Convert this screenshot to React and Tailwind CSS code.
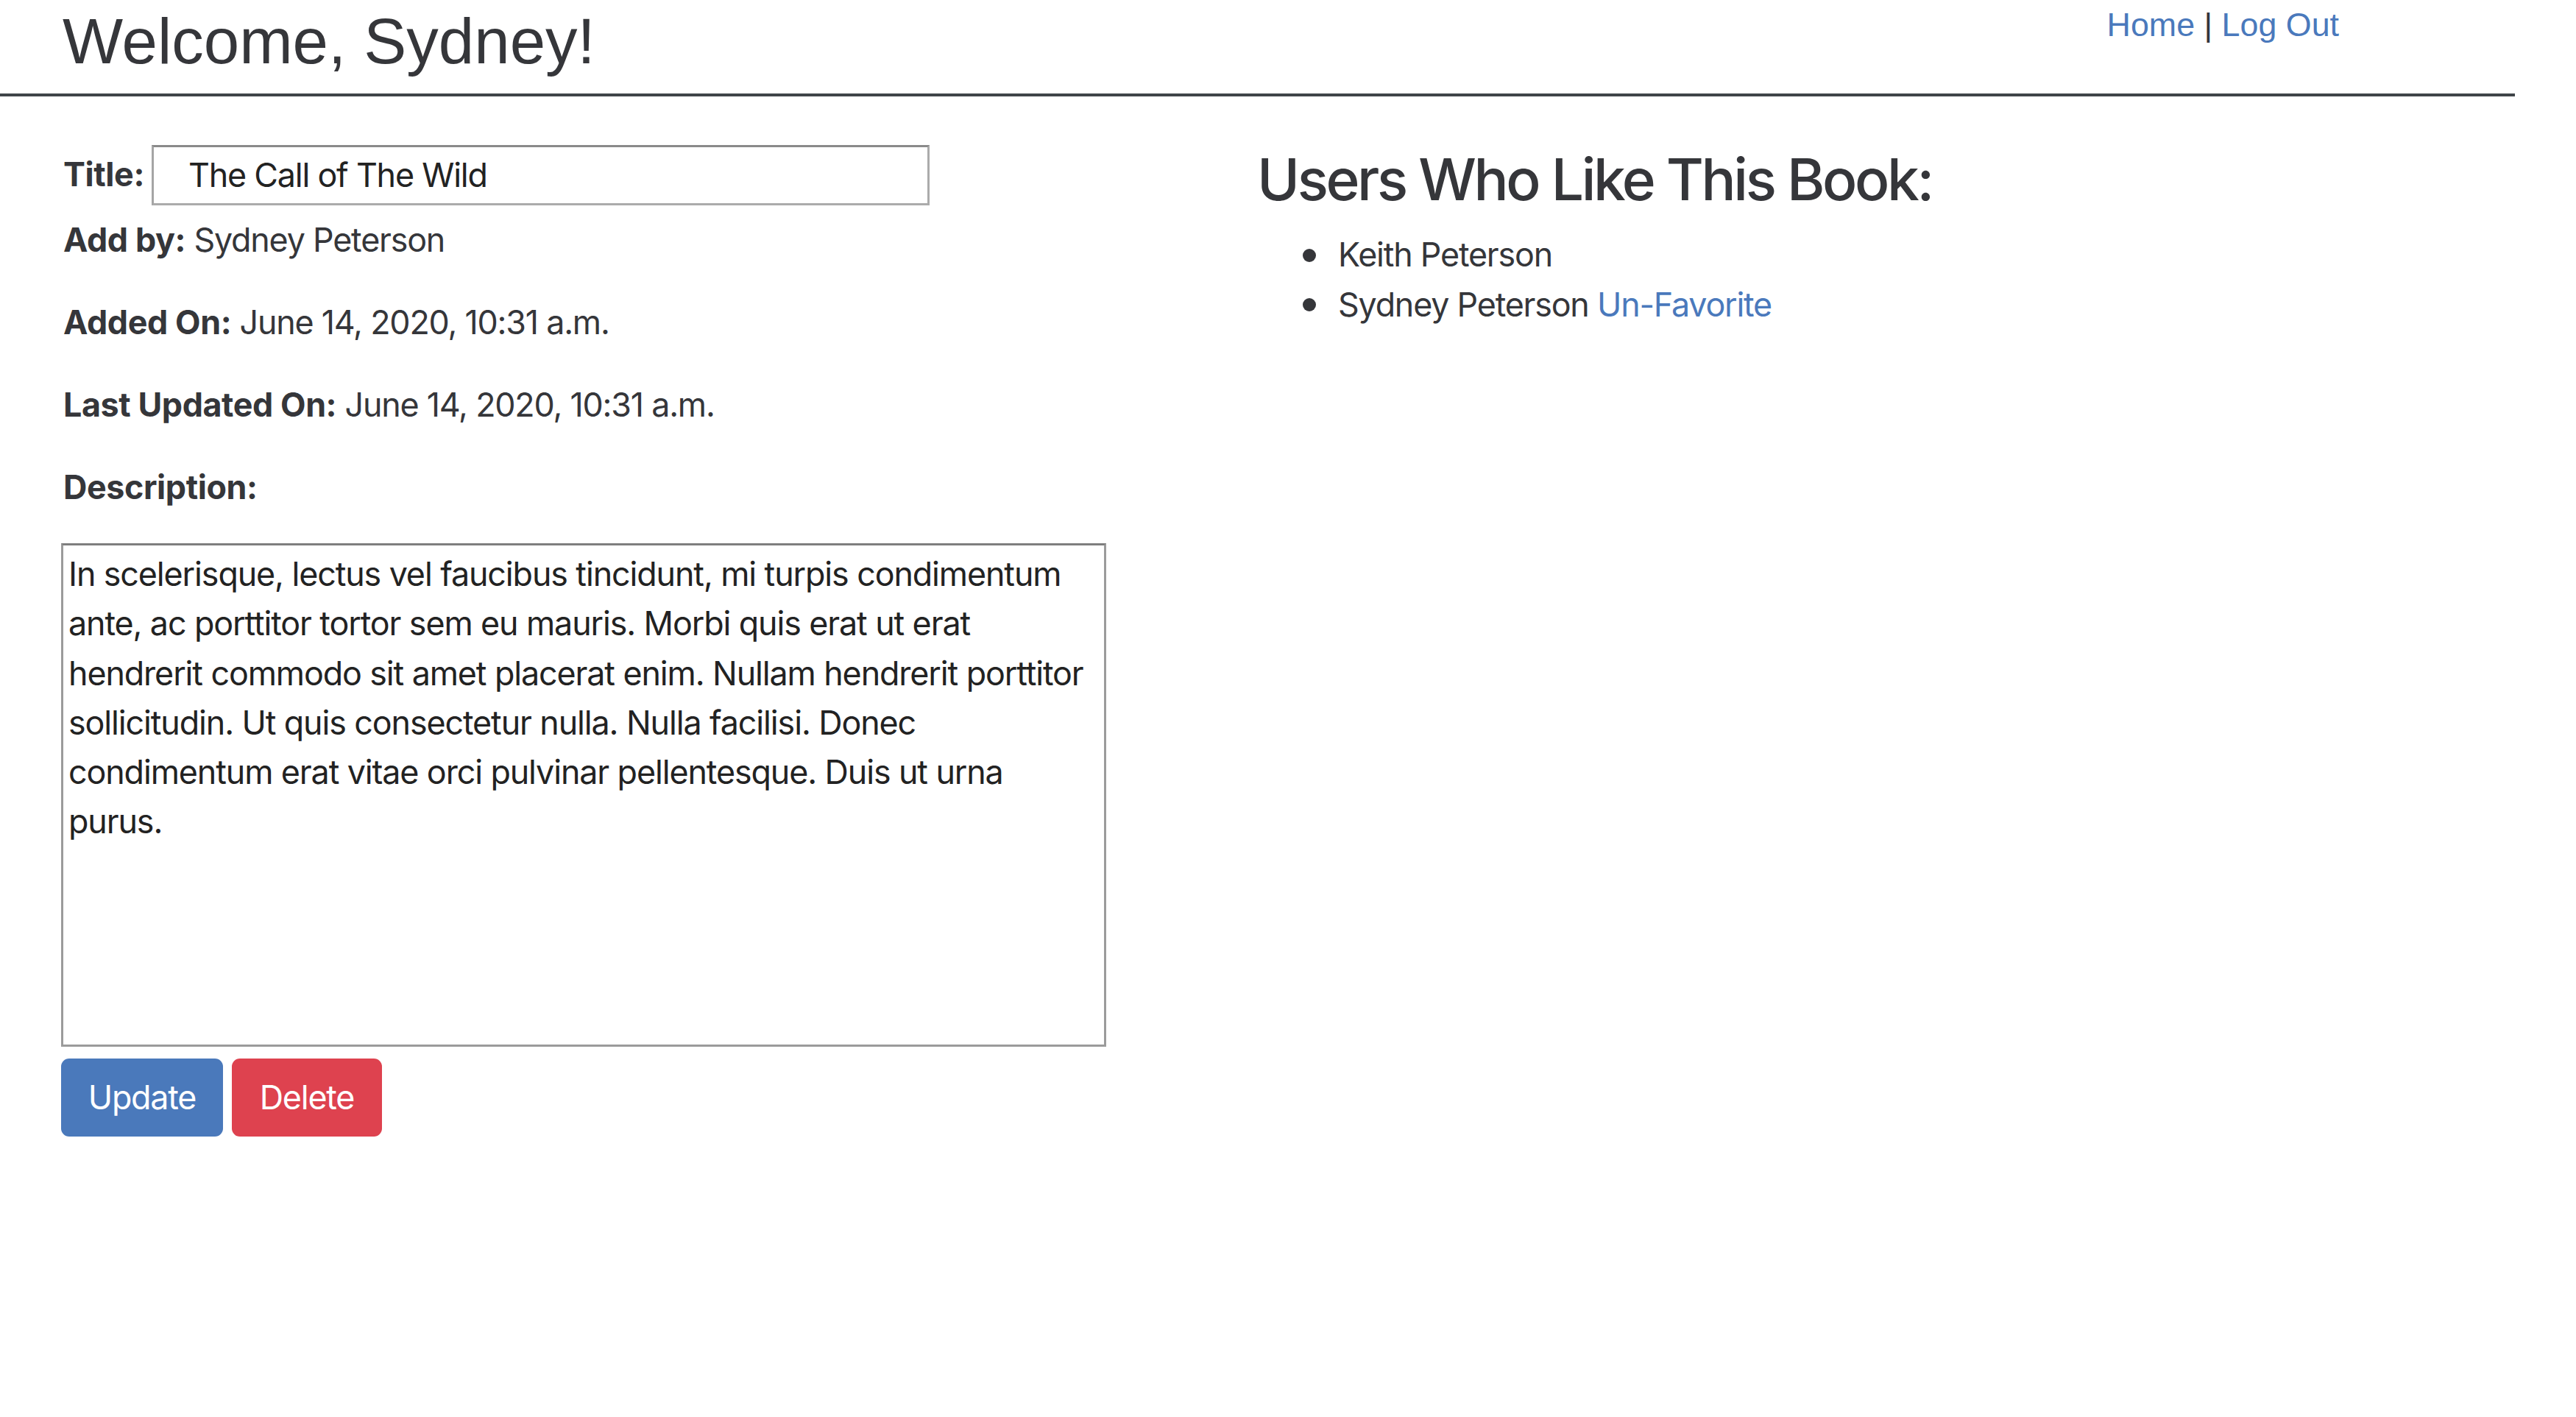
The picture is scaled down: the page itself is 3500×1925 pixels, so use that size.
import React from "react";

const desc =
  "In scelerisque, lectus vel faucibus tincidunt, mi turpis condimentum\nante, ac porttitor tortor sem eu mauris. Morbi quis erat ut erat\nhendrerit commodo sit amet placerat enim. Nullam hendrerit porttitor\nsollicitudin. Ut quis consectetur nulla. Nulla facilisi. Donec\ncondimentum erat vitae orci pulvinar pellentesque. Duis ut urna\npurus.";

export default function App() {
  return (
    <div className="min-h-[1925px] w-[3500px] bg-white text-[#35363a] font-['Inter',sans-serif] text-[44.8px] leading-[1.5] tracking-[-1.2px]">
      <header className="flex h-[127px] w-[3417px] items-start justify-between pl-[85px] pr-[239px] tracking-normal">
        <h1 className="pt-[12px] font-['Liberation_Sans',Arial,sans-serif] text-[87px] leading-none font-normal text-[#35363a]">
          Welcome, Sydney!
        </h1>
        <div className="font-['Liberation_Sans',Arial,sans-serif] text-[44.8px] leading-[1.5]">
          <a href="#" className="text-[#4a79bc]">Home</a>
          <span> | </span>
          <a href="#" className="text-[#4a79bc]">Log Out</a>
        </div>
      </header>
      <div className="h-[4px] w-[3417px] bg-[#3f4449]" />

      <main className="mt-[66px] flex pl-[83px]">
        <section className="w-[1420px] shrink-0">
          <div className="flex items-center">
            <label className="ml-[3px] font-bold tracking-[-0.4px]">Title:</label>
            <input
              type="text"
              defaultValue="The Call of The Wild"
              className="ml-[10px] h-[82px] w-[1057px] border-[3px] border-[#ababab] border-t-[#8a8a8a] border-l-[#a5a5a5] pl-[47px] text-[44.8px] tracking-[-1.2px] text-[#222] outline-none font-['Inter',sans-serif]"
            />
          </div>
          <p className="mt-[14px] mb-[44.8px] ml-[3px]">
            <b className="font-bold tracking-[-0.4px]">Add by:</b> Sydney Peterson
          </p>
          <p className="mb-[44.8px] ml-[3px]">
            <b className="font-bold tracking-[-0.4px]">Added On:</b> June 14, 2020, 10:31 a.m.
          </p>
          <p className="mb-[44.8px] ml-[3px]">
            <b className="font-bold tracking-[-0.4px]">Last Updated On:</b> June 14, 2020, 10:31 a.m.
          </p>
          <p className="mb-[42px] ml-[3px]">
            <b className="font-bold tracking-[-0.4px]">Description:</b>
          </p>
          <textarea
            defaultValue={desc}
            className="block h-[684px] w-[1420px] resize-none border-[3px] border-[#9b9b9b] border-t-[#7e7e7e] px-[7px] pt-[6px] text-[44.8px] leading-[1.5] tracking-[-1.1px] text-[#222] outline-none font-['Inter',sans-serif]"
          />
          <div className="mt-[16px] flex gap-[12px]">
            <button className="h-[106px] w-[220px] rounded-[11px] bg-[#4a79bb] text-white text-[44.8px] tracking-[-1.2px]">
              Update
            </button>
            <button className="h-[106px] w-[204px] rounded-[11px] bg-[#de424f] text-white text-[44.8px] tracking-[-1.2px]">
              Delete
            </button>
          </div>
        </section>

        <section className="ml-[205px]">
          <h3 className="text-[78.4px] leading-[1.2] font-medium tracking-[-3.4px] mb-[22.4px]">
            Users Who Like This Book:
          </h3>
          <ul className="pl-[62px]">
            <li className="flex items-center">
              <span className="mr-[30px] h-[18px] w-[18px] rounded-full bg-[#35363a]" />
              <span>Keith Peterson</span>
            </li>
            <li className="flex items-center">
              <span className="mr-[30px] h-[18px] w-[18px] rounded-full bg-[#35363a]" />
              <span>
                Sydney Peterson{" "}
                <a href="#" className="text-[#4a79bc]">Un-Favorite</a>
              </span>
            </li>
          </ul>
        </section>
      </main>
    </div>
  );
}
